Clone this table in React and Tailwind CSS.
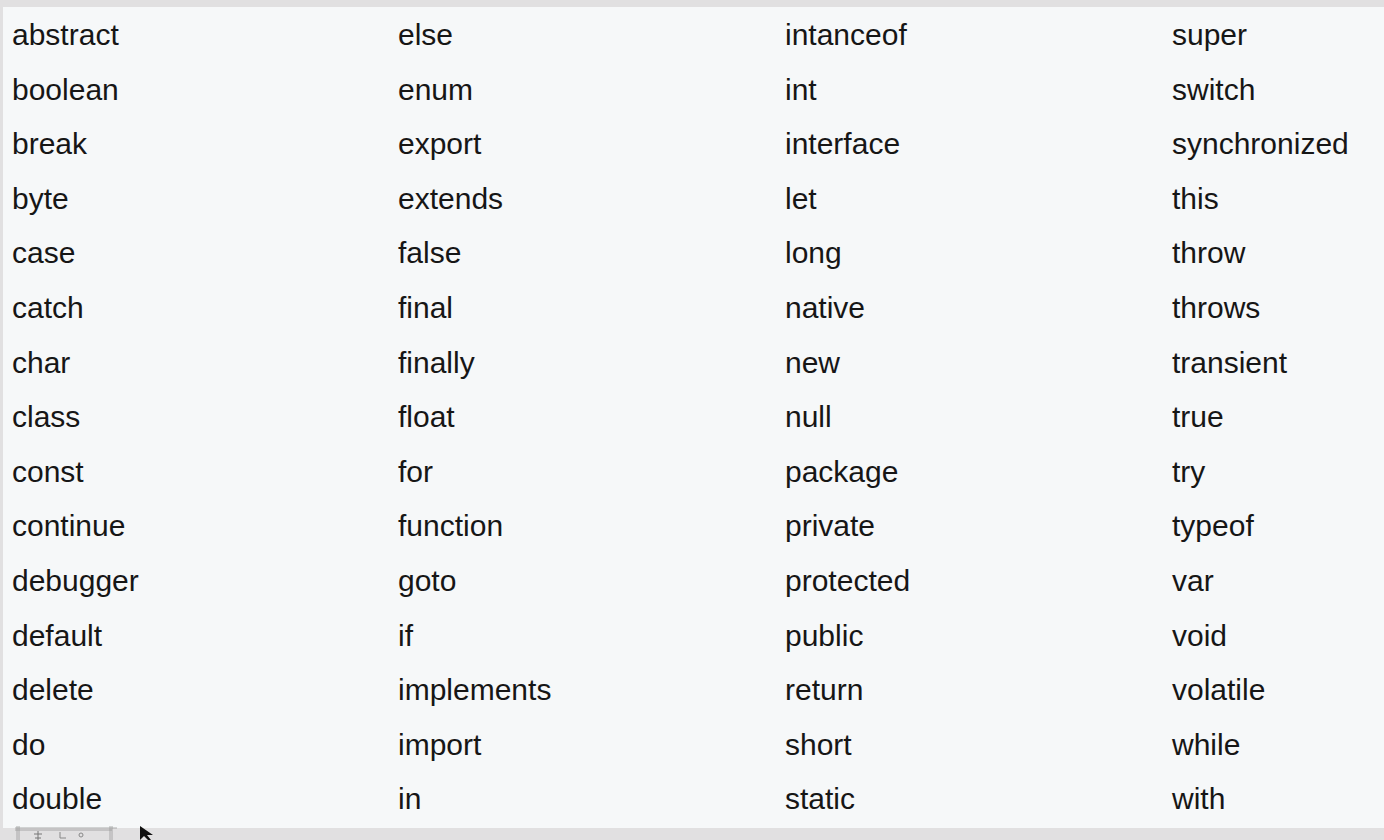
const columns = [
  ['abstract', 'boolean', 'break', 'byte', 'case', 'catch', 'char', 'class', 'const', 'continue', 'debugger', 'default', 'delete', 'do', 'double'],
  ['else', 'enum', 'export', 'extends', 'false', 'final', 'finally', 'float', 'for', 'function', 'goto', 'if', 'implements', 'import', 'in'],
  ['intanceof', 'int', 'interface', 'let', 'long', 'native', 'new', 'null', 'package', 'private', 'protected', 'public', 'return', 'short', 'static'],
  ['super', 'switch', 'synchronized', 'this', 'throw', 'throws', 'transient', 'true', 'try', 'typeof', 'var', 'void', 'volatile', 'while', 'with'],
];

function Cursor() {
  return (
    <svg width="16" height="14" viewBox="0 0 16 14" className="absolute left-[139px] top-[826px]">
      <path d="M1 0 L1 14 L5 10 L9 14 L12 14 L8 9 L14 9 Z" fill="#111" />
    </svg>
  );
}

function Widget() {
  return (
    <svg width="110" height="14" viewBox="0 0 110 14" className="absolute left-[12px] top-[826px]">
      <path d="M3 2 L105 2 M3 4 L100 4" stroke="#999" strokeWidth="0.8" fill="none" />
      <path d="M5 0 L5 14 M7 0 L7 14 M98 0 L98 14 M100 0 L100 14" stroke="#999" strokeWidth="0.8" fill="none" />
      <path d="M22 8 L30 8 M26 5 L26 14 M23 12 L29 12" stroke="#777" strokeWidth="1" fill="none" />
      <path d="M48 6 L48 12 L54 12" stroke="#888" strokeWidth="1" fill="none" />
      <circle cx="69" cy="9" r="2" fill="none" stroke="#888" strokeWidth="1" />
    </svg>
  );
}

export default function App() {
  return (
    <div className="relative h-[840px] w-[1384px] overflow-hidden bg-[#e1e0e1] pt-[7px] pl-[3px]">
      <div className="h-[821px] bg-[#f6f8f9] pl-[9px] pt-[1px]">
        <div
          className="grid grid-cols-[386px_387px_387px_1fr] text-[30px] leading-[54.6px] text-[#161616]"
          style={{ fontFamily: '"Liberation Sans", Arial, sans-serif' }}
        >
          {columns.map((col, i) => (
            <div key={i} className="flex flex-col">
              {col.map((word) => (
                <div key={word} className="h-[54.6px]">
                  {word}
                </div>
              ))}
            </div>
          ))}
        </div>
      </div>
      <Widget />
      <Cursor />
    </div>
  );
}
